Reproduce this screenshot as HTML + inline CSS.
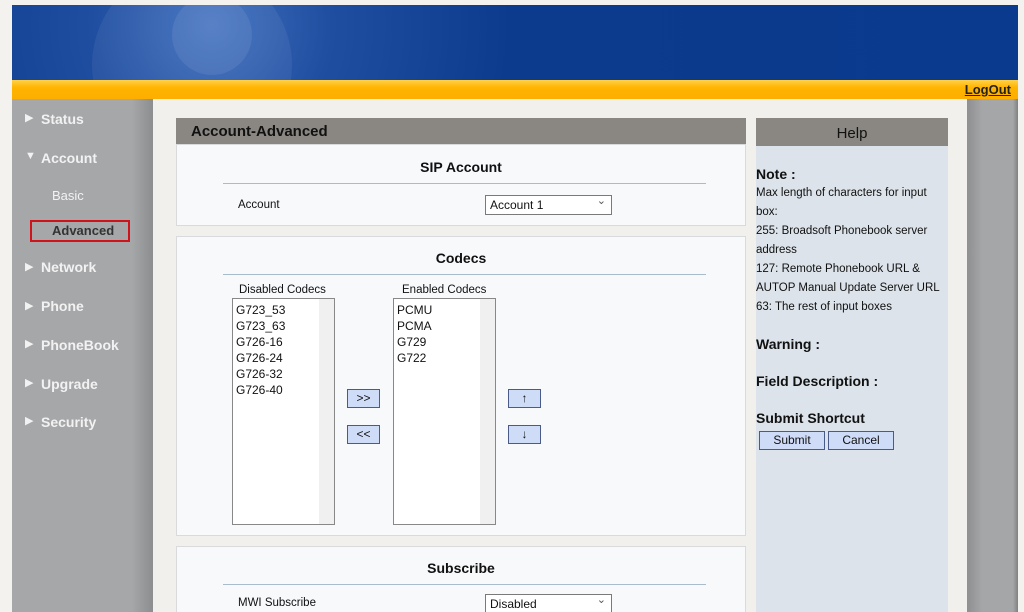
<!DOCTYPE html>
<html><head><meta charset="utf-8"><style>
*{margin:0;padding:0;box-sizing:border-box}
html,body{width:1024px;height:612px;overflow:hidden}
body{background:#f3f2ee;font-family:"Liberation Sans",sans-serif;font-size:11.5px;color:#111;position:relative}
.abs{position:absolute}
#hdr{left:12px;top:5px;width:1006px;height:75px;background:radial-gradient(circle at 200px 20px,#3f6fbf 0,#1f4d9f 120px,#0c3a8c 300px,#0a3a8e 100%);overflow:hidden}
#yb{left:12px;top:80px;width:1006px;height:19px;background:linear-gradient(#ffd24a,#ffb400 40%,#fdae00);}
#side{left:12px;top:99px;width:141px;height:513px;background:linear-gradient(90deg,#a6a7a9 85%,#8c8d8f)}
#rside{left:967px;top:99px;width:51px;height:513px;background:linear-gradient(90deg,#8e8f91,#a5a6a8 30%,#a5a6a8 90%,#7f8082)}
#content{left:153px;top:99px;width:814px;height:513px;background:#f1f0ec}
.nav{position:absolute;left:41px;color:#f2f2f2;font-weight:bold;font-size:14px}
.tri{position:absolute;left:25px;color:#f2f2f2;font-size:11px}
.panel{position:absolute;left:176px;width:570px;background:#f7f9fb;border:1px solid #d8dadc}
h3{font-size:14px;text-align:center;font-weight:bold}
.line{position:absolute;left:46px;width:483px;height:1px;background:#a9bccb}
.sel{position:absolute;background:#fff;border:1px solid #7a7a7a;height:20px;font-size:12px;padding:2px 4px}
.sel:after{content:"⌄";position:absolute;right:5px;top:-2px;font-size:11px;color:#555}
.lb{position:absolute;background:#fff;border:1px solid #888;width:103px;height:227px;padding:3px;line-height:16px;font-size:12px}
.lb .sb{position:absolute;right:0;top:0;width:15px;height:225px;background:#f0f0f0}
.btn{position:absolute;width:33px;height:19px;background:#cfdcf7;border:1px solid #4a5b8a;text-align:center;font-size:12px;line-height:16px}
.hb{position:absolute;height:19px;background:#cfdcf7;border:1px solid #4a5b8a;text-align:center;line-height:17px;font-size:12px}
</style></head><body>
<div id="hdr" class="abs"><div class="abs" style="left:80px;top:-40px;width:200px;height:200px;border-radius:50%;background:rgba(255,255,255,.06)"></div><div class="abs" style="left:160px;top:-10px;width:80px;height:80px;border-radius:50%;background:rgba(255,255,255,.08)"></div></div>
<div id="yb" class="abs"><a style="position:absolute;right:7px;top:2px;font-weight:bold;font-size:13px;color:#222;text-decoration:underline">LogOut</a></div>
<div id="side" class="abs"></div>
<div id="rside" class="abs"></div>
<div id="content" class="abs"></div>
<div class="tri" style="top:111px">▶</div><div class="nav" style="top:111px">Status</div>
<div class="tri" style="top:150px">▼</div><div class="nav" style="top:150px">Account</div>
<div class="abs" style="left:52px;top:188px;color:#f2f2f2;font-size:13px">Basic</div>
<div class="abs" style="left:30px;top:220px;width:100px;height:22px;border:2px solid #d0121a"></div>
<div class="abs" style="left:52px;top:223px;color:#333;font-size:13px;font-weight:bold">Advanced</div>
<div class="tri" style="top:260px">▶</div><div class="nav" style="top:259px">Network</div>
<div class="tri" style="top:299px">▶</div><div class="nav" style="top:298px">Phone</div>
<div class="tri" style="top:337px">▶</div><div class="nav" style="top:337px">PhoneBook</div>
<div class="tri" style="top:376px">▶</div><div class="nav" style="top:376px">Upgrade</div>
<div class="tri" style="top:414px">▶</div><div class="nav" style="top:414px">Security</div>

<div class="abs" style="left:176px;top:118px;width:570px;height:26px;background:#8a8782;color:#111;font-weight:bold;font-size:15px;padding:5px 15px">Account-Advanced</div>
<div class="panel" style="top:144px;height:82px"><h3 style="margin-top:14px">SIP Account</h3><div class="line" style="top:38px"></div><div class="abs" style="left:61px;top:54px">Account</div><div class="sel" style="left:308px;top:50px;width:127px">Account 1</div></div>
<div class="panel" style="top:236px;height:300px"><h3 style="margin-top:13px">Codecs</h3><div class="line" style="top:37px"></div>
<div class="abs" style="left:62px;top:47px">Disabled Codecs</div>
<div class="abs" style="left:225px;top:47px">Enabled Codecs</div>
<div class="lb" style="left:55px;top:61px"><div class="sb"></div>G723_53<br>G723_63<br>G726-16<br>G726-24<br>G726-32<br>G726-40</div>
<div class="lb" style="left:216px;top:61px"><div class="sb"></div>PCMU<br>PCMA<br>G729<br>G722</div>
<div class="btn" style="left:170px;top:152px">&gt;&gt;</div>
<div class="btn" style="left:170px;top:188px">&lt;&lt;</div>
<div class="btn" style="left:331px;top:152px">↑</div>
<div class="btn" style="left:331px;top:188px">↓</div>
</div>
<div class="panel" style="top:546px;height:70px"><h3 style="margin-top:13px">Subscribe</h3><div class="line" style="top:37px"></div><div class="abs" style="left:61px;top:50px">MWI Subscribe</div><div class="sel" style="left:308px;top:47px;width:127px">Disabled</div></div>

<div class="abs" style="left:756px;top:118px;width:192px;height:28px;background:#8a8782;text-align:center;font-size:15px;padding-top:7px">Help</div>
<div class="abs" style="left:756px;top:146px;width:192px;height:466px;background:#dce3ea;line-height:19px">
<div style="font-weight:bold;font-size:14px;margin-top:19px">Note :</div>
<div>Max length of characters for input box:<br>255: Broadsoft Phonebook server address<br>127: Remote Phonebook URL &amp; AUTOP Manual Update Server URL<br>63: The rest of input boxes</div>
<div style="font-weight:bold;font-size:14px;margin-top:18px">Warning :</div>
<div style="font-weight:bold;font-size:14px;margin-top:18px">Field Description :</div>
<div style="font-weight:bold;font-size:14px;margin-top:18px">Submit Shortcut</div>
<div class="hb" style="left:3px;top:285px;width:66px">Submit</div>
<div class="hb" style="left:72px;top:285px;width:66px">Cancel</div>
</div>
</body></html>
